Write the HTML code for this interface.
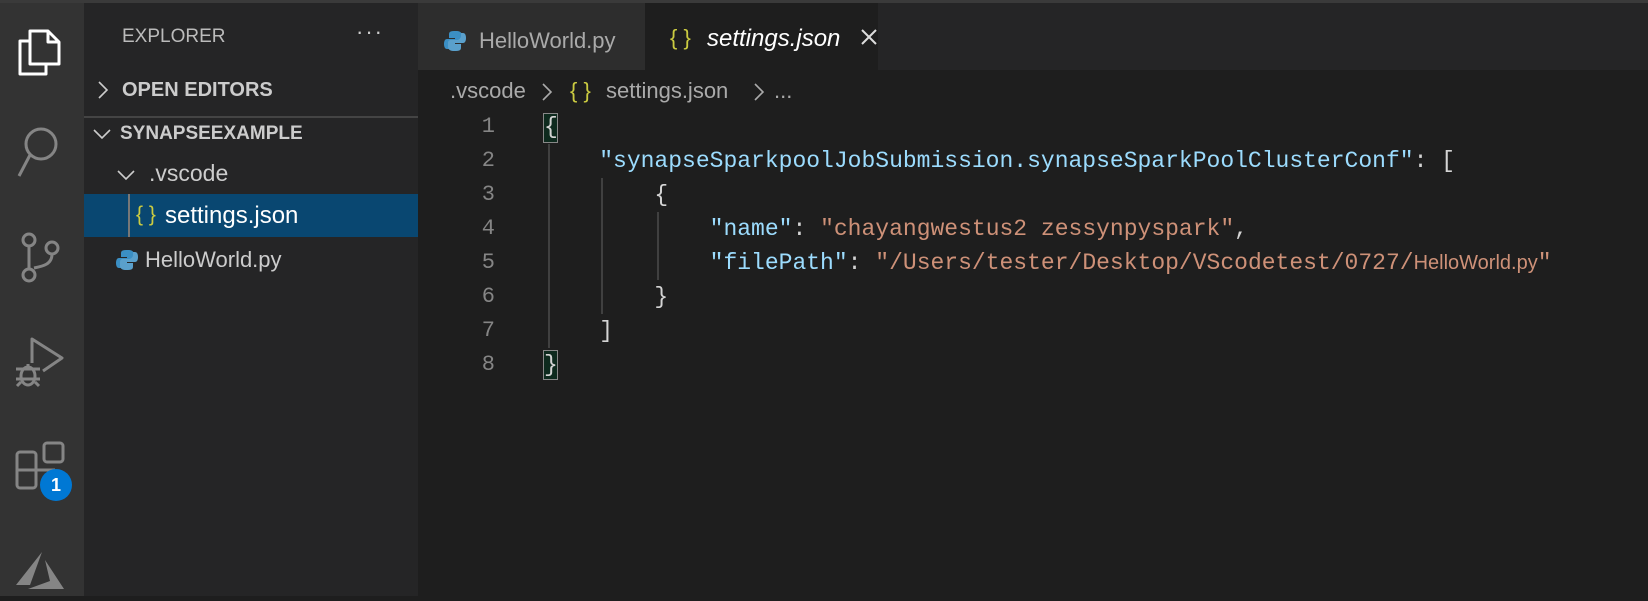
<!DOCTYPE html>
<html><head><meta charset="utf-8"><style>
*{margin:0;padding:0;box-sizing:border-box}
body{width:1648px;height:596px;overflow:hidden;background:#1e1e1e;font-family:"Liberation Sans",sans-serif;position:relative}
.abs{position:absolute}
#top{left:0;top:0;width:1648px;height:3px;background:#3a3a3a}
#act{left:0;top:3px;width:84px;height:593px;background:#333333}
#side{left:84px;top:3px;width:334px;height:593px;background:#252526}
#tabs{left:418px;top:3px;width:1230px;height:67px;background:#252526}
.t{white-space:nowrap;color:#ccc}
.code{font-family:"Liberation Mono","DejaVu Sans Mono",monospace;font-size:23px;white-space:pre;line-height:34px}
.k{color:#9cdcfe}.s{color:#ce9178}.p{color:#d4d4d4}
.ln{color:#858585;font-family:"Liberation Mono",monospace;font-size:22px;text-align:right;width:40px;line-height:34px}
.br{color:#cbcb41;font-size:22px}
</style></head><body>
<div id="top" class="abs"></div>
<div id="act" class="abs">
<svg width="84" height="593" viewBox="0 3 84 593" fill="none" stroke-width="3">
<path d="M20 41h10v-10h18l11 11v22H46v10H20z M30 41v23h16 M48 31v11h11" stroke="#fff" stroke-linejoin="round"/>
<circle cx="41" cy="144" r="15" stroke="#858585"/><path d="M30 155L19 176" stroke="#858585"/>
<circle cx="29" cy="240" r="6" stroke="#858585"/><circle cx="29" cy="275" r="6" stroke="#858585"/><circle cx="52" cy="248" r="6" stroke="#858585"/>
<path d="M29 246v23 M52 254c0 10-8 12-18 14" stroke="#858585"/>
<path d="M32 363V339L62 358L43 371" stroke="#858585" stroke-linejoin="round"/>
<ellipse cx="28" cy="376" rx="7" ry="9" stroke="#858585"/><path d="M16 369h24 M16 379h24 M17 386l4-4 M39 386l-4-4 M28 367v-3" stroke="#858585"/>
<rect x="17" y="452" width="19" height="36" rx="3" stroke="#858585"/><path d="M17 470h38" stroke="#858585"/>
<rect x="44" y="443" width="19" height="19" rx="3" stroke="#858585"/>
<path d="M16 585L42 552L30 585Z M45 560L64 589L28 589L50 581Z" fill="#858585" stroke="none"/>
</svg>
<div class="abs" style="left:40px;top:466px;width:32px;height:32px;border-radius:50%;background:#0078d4;color:#fff;font-weight:bold;font-size:18px;text-align:center;line-height:32px">1</div>
</div>
<div id="side" class="abs">
<div class="abs t" style="left:38px;top:23px;font-size:19px;color:#bbb">EXPLORER</div>
<div class="abs t" style="left:272px;top:16px;font-size:22px;color:#ccc;letter-spacing:2px">···</div>
<svg class="abs" style="left:12px;top:77px" width="14" height="20" viewBox="0 0 14 20"><path d="M3 2l8 8-8 8" stroke="#ccc" stroke-width="1.6" fill="none"/></svg>
<div class="abs t" style="left:38px;top:76px;font-size:20px;font-weight:bold;color:#ccc">OPEN EDITORS</div>
<div class="abs" style="left:0;top:113px;width:334px;height:2px;background:#444"></div>
<svg class="abs" style="left:8px;top:124px" width="20" height="14" viewBox="0 0 20 14"><path d="M2 3l8 8 8-8" stroke="#ccc" stroke-width="1.6" fill="none"/></svg>
<div class="abs t" style="left:36px;top:120px;font-size:19px;font-weight:bold;color:#ccc">SYNAPSEEXAMPLE</div>
<svg class="abs" style="left:32px;top:165px" width="20" height="14" viewBox="0 0 20 14"><path d="M2 3l8 8 8-8" stroke="#ccc" stroke-width="1.6" fill="none"/></svg>
<div class="abs t" style="left:65px;top:157px;font-size:23px;color:#ccc">.vscode</div>
<div class="abs" style="left:0;top:191px;width:334px;height:43px;background:#094771"></div>
<div class="abs" style="left:44px;top:191px;width:2px;height:43px;background:#777"></div>
<div class="abs t br" style="left:52px;top:200px;font-size:21px">{ }</div>
<div class="abs t" style="left:81px;top:199px;font-size:24px;color:#fff">settings.json</div>
<svg class="abs" style="left:32px;top:246px" width="22" height="22" viewBox="0 0 22 22"><path d="M10 1c-5 0-5 2-5 4v3h6v1H3c-2 0-3 2-3 5s1 5 3 5h2v-3c0-2 2-4 4-4h6c2 0 3-1 3-3V5c0-2-2-4-5-4z" fill="#3b8fc4"/><path d="M12 21c5 0 5-2 5-4v-3h-6v-1h8c2 0 3-2 3-5s-1-5-3-5h-2v3c0 2-2 4-4 4H7c-2 0-3 1-3 3v4c0 2 2 4 5 4z" fill="#5aa0cc"/></svg>
<div class="abs t" style="left:61px;top:244px;font-size:22px;color:#ccc">HelloWorld.py</div>
</div>
<div id="tabs" class="abs">
<div class="abs" style="left:0;top:0;width:227px;height:67px;background:#2d2d2d"></div>
<svg class="abs" style="left:26px;top:27px" width="22" height="22" viewBox="0 0 22 22"><path d="M10 1c-5 0-5 2-5 4v3h6v1H3c-2 0-3 2-3 5s1 5 3 5h2v-3c0-2 2-4 4-4h6c2 0 3-1 3-3V5c0-2-2-4-5-4z" fill="#3b8fc4"/><path d="M12 21c5 0 5-2 5-4v-3h-6v-1h8c2 0 3-2 3-5s-1-5-3-5h-2v3c0 2-2 4-4 4H7c-2 0-3 1-3 3v4c0 2 2 4 5 4z" fill="#5aa0cc"/></svg>
<div class="abs t" style="left:61px;top:25px;font-size:22px;color:#aaa">HelloWorld.py</div>
<div class="abs" style="left:227px;top:0;width:233px;height:67px;background:#1e1e1e"></div>
<div class="abs t br" style="left:252px;top:22px;font-size:22px">{ }</div>
<div class="abs t" style="left:289px;top:22px;font-size:24px;color:#fff;font-style:italic">settings.json</div>
<svg class="abs" style="left:442px;top:25px" width="18" height="18" viewBox="0 0 18 18"><path d="M2 2l14 14M16 2L2 16" stroke="#ddd" stroke-width="2"/></svg>
</div>
<div class="abs t" style="left:450px;top:78px;font-size:22px;color:#aaa">.vscode</div>
<svg class="abs" style="left:541px;top:82px" width="12" height="20" viewBox="0 0 12 20"><path d="M2 2l8 8-8 8" stroke="#aaa" stroke-width="1.6" fill="none"/></svg>
<div class="abs t br" style="left:570px;top:78px">{ }</div>
<div class="abs t" style="left:606px;top:78px;font-size:22px;color:#aaa">settings.json</div>
<svg class="abs" style="left:753px;top:82px" width="12" height="20" viewBox="0 0 12 20"><path d="M2 2l8 8-8 8" stroke="#aaa" stroke-width="1.6" fill="none"/></svg>
<div class="abs t" style="left:774px;top:78px;font-size:22px;color:#aaa">...</div>
<div class="abs ln" style="left:455px;top:110px">1<br>2<br>3<br>4<br>5<br>6<br>7<br>8</div>
<div class="abs" style="left:548px;top:144px;width:2px;height:204px;background:#404040"></div>
<div class="abs" style="left:601px;top:178px;width:2px;height:136px;background:#404040"></div>
<div class="abs" style="left:657px;top:212px;width:2px;height:68px;background:#404040"></div>
<div class="abs" style="left:543px;top:113px;width:15px;height:30px;border:1px solid #888;background:#0e2a1e"></div>
<div class="abs" style="left:543px;top:350px;width:15px;height:30px;border:1px solid #888;background:#0e2a1e"></div>
<div class="abs code p" style="left:544px;top:110px">{
    <span class="k">"synapseSparkpoolJobSubmission.synapseSparkPoolClusterConf"</span>: [
        {
            <span class="k">"name"</span>: <span class="s">"chayangwestus2 zessynpyspark"</span>,
            <span class="k">"filePath"</span>: <span class="s">"/Users/tester/Desktop/VScodetest/0727/<span style="font-family:'Liberation Sans',sans-serif;font-size:20px">HelloWorld.py</span>"</span>
        }
    ]
}</div>
</body></html>
